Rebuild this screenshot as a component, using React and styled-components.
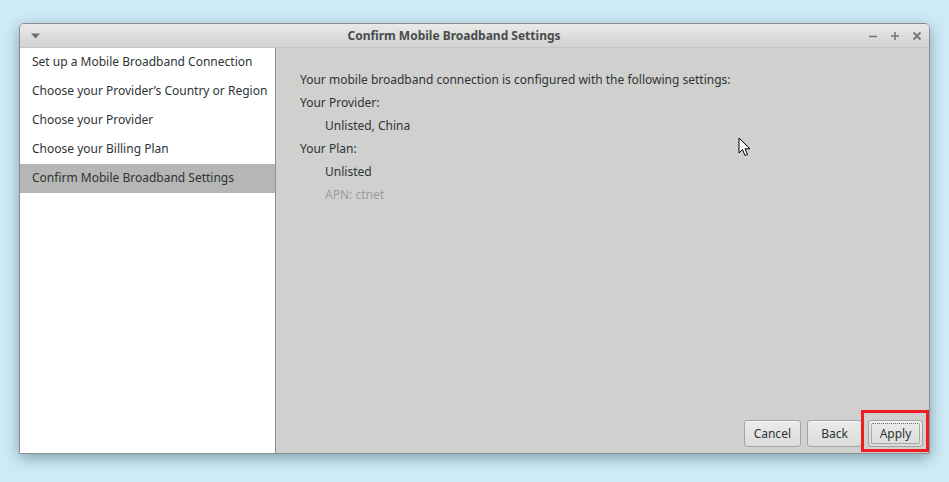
import React from "react";
import styled, { createGlobalStyle } from "styled-components";

const Global = createGlobalStyle`
  html, body {
    margin: 0;
    padding: 0;
    background: #cdeaf5;
  }
  body {
    width: 949px;
    height: 482px;
    overflow: hidden;
    font-family: "Noto Sans", "Open Sans", sans-serif;
    font-size: 12px;
    color: #2e3436;
  }
`

const Desktop = styled.div`
    position: relative;
    width: 949px;
    height: 482px;
    padding: 23px 19px 0 19px;
    box-sizing: border-box;
`

const Window = styled.div`
    width: 911px;
    height: 431px;
    display: flex;
    flex-direction: column;
    border: 1px solid #8a8e90;
    border-radius: 5px 5px 0 0;
    box-sizing: border-box;
    box-shadow: 0 4px 14px rgba(40, 70, 85, 0.45);
    overflow: hidden;
`

const TitleBar = styled.div`
    height: 23px;
    flex: none;
    display: flex;
    align-items: center;
    padding: 0 5px 0 8px;
    background: linear-gradient(#e9e9e8, #d2d2d1);
    border-bottom: 1px solid #c4c4c4;
`

const MenuButton = styled.div`
    width: 14px;
    display: flex;
    justify-content: center;
`

const Title = styled.div`
    flex: 1;
    text-align: center;
    font-weight: bold;
    font-size: 12px;
    color: #4a4c4d;
`

const Controls = styled.div`
    display: flex;
    gap: 8px;
    align-items: center;
`

const Control = styled.div`
    width: 14px;
    height: 14px;
    display: flex;
    align-items: center;
    justify-content: center;
`

const Body = styled.div`
    flex: 1;
    display: flex;
    min-height: 0;
`

const Sidebar = styled.ul`
    width: 255px;
    flex: none;
    margin: 0;
    padding: 0;
    list-style: none;
    background: #ffffff;
    border-right: 1px solid #8e8e8e;
`

const Step = styled.li`
    height: 29px;
    line-height: 28px;
    padding-left: 12px;
    background: ${p => (p.$active ? "#b6b6b5" : "transparent")};
    color: #2e3436;
    white-space: nowrap;
`

const Content = styled.div`
    flex: 1;
    display: flex;
    flex-direction: column;
    background: #d0d0cf;
    padding: 20px 6px 6px 24px;
`

const Info = styled.div`
    flex: 1;
`

const Line = styled.div`
    height: 23px;
    line-height: 23px;
    padding-left: ${p => (p.$indent ? "25px" : "0")};
    color: ${p => (p.$dim ? "#9b9b9a" : "#2e3436")};
`

const Actions = styled.div`
    display: flex;
    justify-content: flex-end;
    gap: 6px;
`

const Button = styled.button`
    height: 27px;
    min-width: 55px;
    padding: 0 9px;
    border: 1px solid #a3a3a2;
    border-radius: 3px;
    background: linear-gradient(#ebebea, #dcdcdb);
    font-family: inherit;
    font-size: 12px;
    color: #2e3436;
    position: relative;
    box-shadow: inset 0 1px 0 #f6f6f6;
    ${p => p.$focused && `
      &::after {
        content: "";
        position: absolute;
        inset: 2px;
        border: 1px dotted #6f6f6f;
        border-radius: 2px;
      }
    `}
`

const Highlight = styled.div`
    position: absolute;
    left: 861px;
    top: 410px;
    width: 68px;
    height: 42px;
    border: 3px solid #ee1c25;
    box-sizing: border-box;
    pointer-events: none;
`

const Cursor = styled.svg`
    position: absolute;
    left: 738px;
    top: 137px;
`

export default function App() {
    const steps = [
        "Set up a Mobile Broadband Connection",
        "Choose your Provider\u2019s Country or Region",
        "Choose your Provider",
        "Choose your Billing Plan",
        "Confirm Mobile Broadband Settings",
    ]
    return (
        <Desktop>
            <Global />
            <Window>
                <TitleBar>
                    <MenuButton>
                        <svg width="9" height="6" viewBox="0 0 9 6">
                            <path d="M0 0.5 H9 L4.5 5.5 Z" fill="#6b6d6e" />
                        </svg>
                    </MenuButton>
                    <Title>Confirm Mobile Broadband Settings</Title>
                    <Controls>
                        <Control>
                            <svg width="10" height="10" viewBox="0 0 10 10">
                                <path d="M1 5.5 H9" stroke="#737577" strokeWidth="1.6" />
                            </svg>
                        </Control>
                        <Control>
                            <svg width="10" height="10" viewBox="0 0 10 10">
                                <path d="M1 5 H9 M5 1 V9" stroke="#737577" strokeWidth="1.6" />
                            </svg>
                        </Control>
                        <Control>
                            <svg width="10" height="10" viewBox="0 0 10 10">
                                <path d="M1.5 1.5 L8.5 8.5 M8.5 1.5 L1.5 8.5" stroke="#737577" strokeWidth="1.8" />
                            </svg>
                        </Control>
                    </Controls>
                </TitleBar>
                <Body>
                    <Sidebar>
                        {steps.map((s, i) => (
                            <Step key={s} $active={i === steps.length - 1}>{s}</Step>
                        ))}
                    </Sidebar>
                    <Content>
                        <Info>
                            <Line>Your mobile broadband connection is configured with the following settings:</Line>
                            <Line>Your Provider:</Line>
                            <Line $indent>Unlisted, China</Line>
                            <Line>Your Plan:</Line>
                            <Line $indent>Unlisted</Line>
                            <Line $indent $dim>APN: ctnet</Line>
                        </Info>
                        <Actions>
                            <Button>Cancel</Button>
                            <Button>Back</Button>
                            <Button $focused>Apply</Button>
                        </Actions>
                    </Content>
                </Body>
            </Window>
            <Highlight />
            <Cursor width="14" height="22" viewBox="0 0 14 22">
                <path d="M1 1 L1 16 L4.5 12.5 L7 18.5 L9.5 17.5 L7 11.8 L12 11.8 Z" fill="#ffffff" stroke="#000000" strokeWidth="1" strokeLinejoin="round" />
            </Cursor>
        </Desktop>
    )
}
